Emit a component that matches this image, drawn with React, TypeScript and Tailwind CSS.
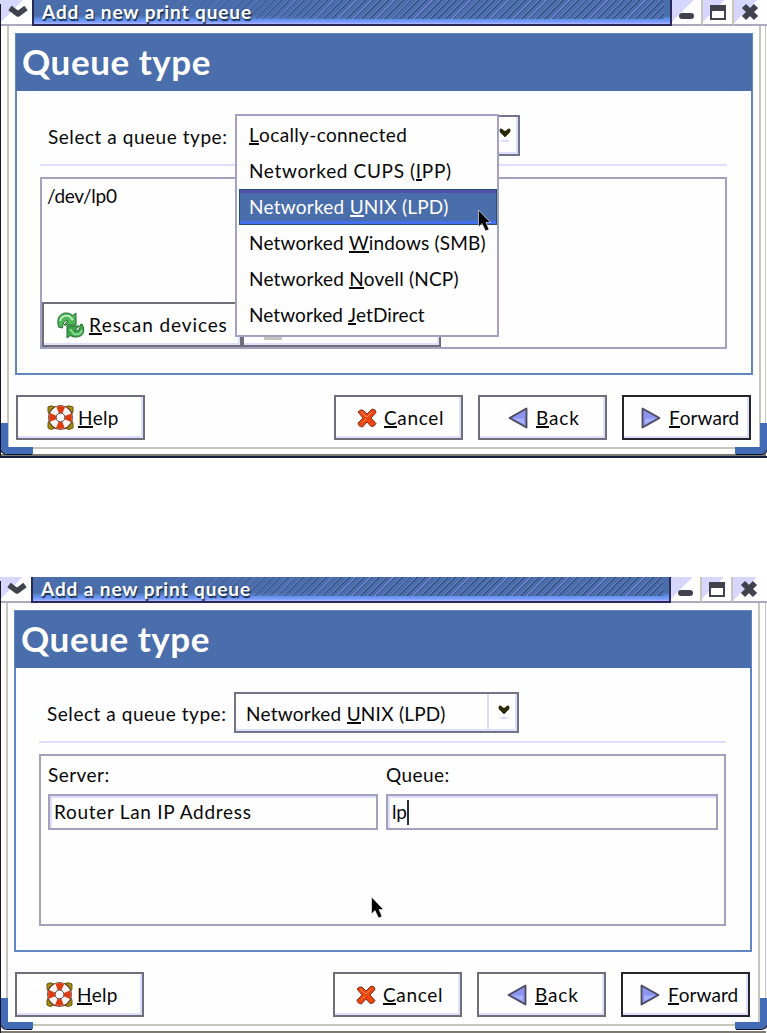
import React from "react";
import clsx from "clsx";

interface MnemonicProps {
  text: string;
  className?: string;
}

// Подчёркивает букву, которая стоит после "_"
function Mnemonic({ text, className }: MnemonicProps) {
  const index = text.indexOf("_");
  if (index === -1) {
    return <span className={clsx("whitespace-pre", className)}>{text}</span>;
  }
  return (
    <span className={clsx("whitespace-pre", className)}>
      {text.slice(0, index)}
      <span className="inline-block h-[21px] border-b-2 border-current leading-[21px]">
        {text[index + 1]}
      </span>
      {text.slice(index + 2)}
    </span>
  );
}

function LifebuoyIcon() {
  return (
    <svg width="27" height="25" viewBox="0 0 27 25">
      <path d="M1 2Q4-.5 8 2L13 4l5-2q4-2.500 8 0v5l-3 5 3 6v5q-4 3-8 0l-5-2-5 2q-4 3-7 0v-5l3-6-3-5z" fill="#a58a10" stroke="#6b5a10" />
      <circle cx="13.500" cy="12.500" r="8" fill="none" stroke="#4a2020" strokeWidth="8.500" />
      <circle cx="13.500" cy="12.500" r="8" fill="none" stroke="#f7f3f0" strokeWidth="6.800" />
      <circle
        cx="13.500"
        cy="12.500"
        r="8"
        fill="none"
        stroke="#de3c10"
        strokeWidth="6.800"
        strokeDasharray="6.283 6.283"
        strokeDashoffset="3.141"
      />
      <circle cx="13.500" cy="12.500" r="4.400" fill="#fff" stroke="#5a4a52" />
    </svg>
  );
}

function CancelIcon() {
  return (
    <svg width="20" height="20" viewBox="0 0 20 20">
      <path
        d="M1 4Q4 .5 6.500 2.500L10 6 15 1Q19 1 19 4.500L14 10 19 15.500Q17.500 19 14 18.500L10 14 5.500 19Q1 18.500 1 15L6 10Z"
        fill="#ef4510"
        stroke="#7b3520"
        strokeLinejoin="round"
      />
      <path d="M4 4l6 5 5-5M5 15l4-4" fill="none" stroke="#ff8a5a" />
    </svg>
  );
}

function ArrowIcon({ direction }: { direction: "back" | "forward" }) {
  return (
    <svg
      width="20"
      height="22"
      viewBox="0 0 20 22"
      className={direction === "back" ? "-scale-x-100" : ""}
    >
      <path d="M1.500 1.500v19L18.500 11z" fill="#8c92ee" stroke="#4a4a5a" strokeWidth="1.800" strokeLinejoin="round" />
      <path d="M4 11.500h11L4 17z" fill="#a5b2ff" />
    </svg>
  );
}

function RescanIcon() {
  return (
    <svg width="28" height="27" viewBox="0 0 28 27" strokeLinejoin="round">
      <path d="M1.500 15C-1 5 4 1 9 1c3 0 5 1 7 2.500L19 1v12H7l4-4c-3-1-5 1-5.500 7z" fill="#4fb55a" stroke="#1f6b2c" />
      <path d="M3 9c1-4 4-6 9-5l4 4" fill="none" stroke="#b9edbc" strokeWidth="2" />
      <path d="M25 12c4 7 1 13-6 13-2 0-4 0-5.500-1.500L10 26V14h12l-4 4.500c3 1 5-1 5-5.500z" fill="#3fa54a" stroke="#1f6b2c" />
      <path d="M13 17l4 5c4 1 7 0 8-4" fill="none" stroke="#8fd996" strokeWidth="2" />
    </svg>
  );
}

function Pointer({ className }: { className: string }) {
  return (
    <svg width="15" height="23" viewBox="0 0 14 23" className={clsx("absolute z-20", className)}>
      <path d="M1 1v17l3.500-3.500L8 22l3.500-1.500L8.500 13.500H13z" fill="#000" stroke="#fff" strokeWidth=".6" />
    </svg>
  );
}

interface PushButtonProps {
  icon: React.ReactNode;
  label: string;
  className?: string;
  labelClass?: string;
  isDefault?: boolean;
}

function PushButton({ icon, label, className, labelClass, isDefault }: PushButtonProps) {
  return (
    <button
      className={clsx(
        "flex h-[45px] items-center border-2 bg-[#fefefe] shadow-[inset_-2px_-2px_0_#dedeff]",
        isDefault ? "border-[#25252d]" : "border-[#6f6f7c]",
        className
      )}
    >
      {icon}
      <Mnemonic text={label} className={labelClass} />
    </button>
  );
}

function TitleBar({ menuWidth }: { menuWidth: string }) {
  const control =
    "relative flex h-[26px] w-[31px] items-center justify-center border-b-2 border-r-2 border-b-[#adaabd] border-r-[#c6c6bd] bg-[linear-gradient(135deg,#d6d6ff_40%,#fefefe_42%)]";
  return (
    <div className="flex h-[26px]">
      <div
        className={clsx(
          "flex items-start justify-center border-b-2 border-[#adaabd] bg-[linear-gradient(135deg,#d6d6ff_40%,#fefefe_42%)]",
          menuWidth
        )}
      >
        <svg width="20" height="20" viewBox="0 0 20 20" className="ml-[3px]">
          <path d="M2 8l8 6 8-6" fill="none" stroke="#42424f" strokeWidth="5.500" strokeLinejoin="round" />
        </svg>
      </div>
      <div className="relative flex h-[26px] w-[640px] overflow-hidden border-b-2 border-l-2 border-r-2 border-[#29295a] bg-[linear-gradient(#4a6dab_0_65%,#6391e8_80%,#739aff_90%,#b5b5ff)]">
        <div className="ml-[98px] h-[19px] w-[532px] bg-[repeating-linear-gradient(135deg,#4a6dab_0_2.200px,#7480d0_2.200px_3.100px,#34557f_3.100px_4.300px,#4a6dab_4.300px_5.380px)] [mask-image:linear-gradient(90deg,transparent,#000_45%)]" />
        <h1 className="absolute left-[8px] top-0 whitespace-pre text-[19px] font-bold leading-[24px] tracking-[.9px] text-white [text-shadow:1px_2px_1px_#173052]">
          Add a new print queue
        </h1>
      </div>
      <div className={control}>
        <span className="mt-[7px] h-[6px] w-[15px] rounded-[3px] bg-[#42424f]" />
      </div>
      <div className={control}>
        <span className="h-[15px] w-[16px] border-2 border-t-[6px] border-[#42424f]" />
      </div>
      <div className="flex h-[26px] flex-1 items-center justify-center border-b-2 border-[#adaabd] bg-[linear-gradient(135deg,#d6d6ff_40%,#fefefe_42%)]">
        <svg width="18" height="18" viewBox="0 0 18 18" className="mr-[2px]">
          <path d="M3 3l12 12M15 3L3 15" stroke="#42424f" strokeWidth="6" />
        </svg>
      </div>
    </div>
  );
}

// Синие уголки рамки окна
function Corners() {
  return (
    <>
      <i className="absolute bottom-[4px] left-[1px] h-[31px] w-[32px] rounded-bl-[7px] border-b-[7px] border-l-[7px] border-[#426bb5] shadow-[-1px_1px_0_#101030]" />
      <i className="absolute bottom-[4px] right-0 h-[31px] w-[32px] rounded-br-[7px] border-b-[7px] border-r-[7px] border-[#426bb5] shadow-[1px_1px_0_#101030]" />
    </>
  );
}

interface QueueWindowProps {
  children: React.ReactNode;
  second?: boolean;
}

function QueueWindow({ children, second }: QueueWindowProps) {
  return (
    <section className={clsx("relative w-[767px] overflow-hidden bg-[#fefefe]", second ? "h-[456px]" : "h-[458px]")}>
      <TitleBar menuWidth={second ? "w-[31px]" : "w-[32px]"} />
      <div
        className={clsx(
          "h-[423px] border-b-2 border-l-2 border-r-2 border-[#c6c6bd] pt-[7px]",
          second ? "ml-[6px] mr-[7px] pl-[6px]" : "ml-[7px] mr-[6px] pl-[6px]"
        )}
      >
        <div className="h-[342px] w-[738px] border-2 border-[#5f88c2]">
          <h2 className="-mx-px -mt-px h-[57px] bg-[#4a6dab] pl-[6px] text-[35px] font-bold leading-[54px] tracking-[.55px] text-white">
            Queue type
          </h2>
          {children}
        </div>
        <div className="mt-[20px] flex pl-px">
          <PushButton icon={<LifebuoyIcon />} label="_Help" className="w-[129px] gap-[4px] pl-[29px]" labelClass="tracking-[.2px]" />
          <PushButton icon={<CancelIcon />} label="_Cancel" className="ml-[189px] w-[129px] gap-[7px] pl-[21px]" labelClass="tracking-[.65px]" />
          <PushButton icon={<ArrowIcon direction="back" />} label="_Back" className="ml-[15px] w-[129px] gap-[8px] pl-[28px]" labelClass="tracking-[.8px]" />
          <PushButton icon={<ArrowIcon direction="forward" />} label="_Forward" className="ml-[15px] w-[129px] gap-[8px] pl-[17px]" labelClass="tracking-[.05px]" isDefault />
        </div>
      </div>
      <div className={clsx("h-[7px] border-b-2 border-[#7b7b73]", second ? "mr-px" : "ml-px mr-px")} />
      <div className="h-[2px] bg-[#182040]" />
      <i className="absolute bottom-0 left-0 top-[4px] w-px bg-[#18181f]" />
      <i className="absolute bottom-[4px] right-[1px] top-[26px] w-px bg-[#c6c6bd]" />
      <Corners />
    </section>
  );
}

function ComboBox({ value }: { value: string }) {
  return (
    <div className="flex h-[41px] w-[285px] border-2 border-[#73738a] shadow-[inset_-2px_-2px_0_#dedeff]">
      <div className="w-[253px] border-r-2 border-[#dedeff] pl-[10px] leading-[39px]">
        <Mnemonic text={value} className="tracking-[.25px]" />
      </div>
      <div className="flex flex-1 justify-center pl-px pt-[11px]">
        <svg width="12" height="16" viewBox="0 0 12 16">
          <path d="M1 1h2l2 2h2l2-2h2v3L6 9 1 4z" fill="#292908" stroke="#292908" strokeWidth=".6" />
          <path d="M2 12h8v2H2z" fill="#dedeff" />
        </svg>
      </div>
    </div>
  );
}

function TypeRow({ value, children }: { value: string; children?: React.ReactNode }) {
  return (
    <div className="relative mt-[24px] flex h-[51px] w-[687px] border-b-2 border-[#dedeff]">
      <span className="w-[195px] whitespace-pre pl-[8px] leading-[44px] tracking-[.54px]">Select a queue type:</span>
      <ComboBox value={value} />
      {children}
    </div>
  );
}

const queueTypes = [
  { label: "_Locally-connected", tracking: "tracking-[.35px]" },
  { label: "Networked CUPS (_IPP)", tracking: "tracking-[.65px]" },
  { label: "Networked _UNIX (LPD)", tracking: "tracking-[.25px]" },
  { label: "Networked _Windows (SMB)", tracking: "tracking-[.18px]" },
  { label: "Networked _Novell (NCP)", tracking: "tracking-[.2px]" },
  { label: "Networked _JetDirect", tracking: "tracking-[.08px]" },
];

function QueueMenu({ selected }: { selected: number }) {
  return (
    <ul className="absolute left-[195px] top-[-1px] z-10 h-[223px] w-[264px] border-2 border-[#a3a1c4] bg-[#fefefe] pl-[2px] pt-px">
      {queueTypes.map((type, index) => (
        <li
          key={type.label}
          className={clsx(
            "h-[36px] pl-[10px] leading-[36px]",
            index === selected &&
              "bg-[#4a6dab] text-white shadow-[inset_0_0_0_1px_#294d6b,inset_0_-4px_0_#4270ef,inset_0_4px_0_#5251ad]"
          )}
        >
          <Mnemonic text={type.label} className={type.tracking} />
        </li>
      ))}
    </ul>
  );
}

interface FieldProps {
  label: string;
  value: string;
  width: string;
  focused?: boolean;
}

function Field({ label, value, width, focused }: FieldProps) {
  return (
    <div className={width}>
      <div className="h-[32px] leading-[26px]">{label}</div>
      <div className="flex h-[36px] items-center border-2 border-[#a3a1bd] pl-[4px] shadow-[inset_2px_2px_0_#dedeff]">
        <span className={clsx("whitespace-pre", focused ? "tracking-[-.3px]" : "tracking-[.7px]")}>{value}</span>
        {focused && <i className="h-[25px] w-[2px] bg-[#303030]" />}
      </div>
    </div>
  );
}

export default function App() {
  return (
    <main className="h-[1033px] w-[767px] overflow-hidden bg-white font-[Lato,sans-serif] text-[19px] leading-[24px] tracking-[.45px] text-[#080808]">
      <QueueWindow>
        <div className="pl-[23px]">
          <TypeRow value="">
            <QueueMenu selected={2} />
            <Pointer className="left-[437px] top-[94px]" />
          </TypeRow>
          <div className="mt-[11px] flex h-[172px] w-[687px] flex-col border-2 border-[#a3a1bd]">
            <div className="flex-1 pl-[5px] pt-[5px] tracking-[-.3px]">/dev/lp0</div>
            <div className="flex">
              <PushButton icon={<RescanIcon />} label="_Rescan devices" className="w-[200px] gap-[4px] pl-[13px] pt-px" labelClass="tracking-[.9px]" />
              <div className="flex h-[45px] w-[199px] items-end border-2 border-[#6f6f7c] pb-[5px] pl-[20px] shadow-[inset_-2px_-2px_0_#dedeff]">
                <i className="h-[3px] w-[18px] bg-[#c6c6bd]" />
              </div>
            </div>
          </div>
        </div>
      </QueueWindow>
      <div className="h-[119px]" />
      <QueueWindow second>
        <div className="pl-[23px]">
          <TypeRow value="Networked _UNIX (LPD)" />
          <div className="relative mt-[11px] flex h-[172px] w-[687px] gap-[8px] border-2 border-[#a3a1bd] pl-[7px] pt-[6px]">
            <Field label="Server:" value="Router Lan IP Address" width="w-[330px]" />
            <Field label="Queue:" value="lp" width="w-[332px]" focused />
            <Pointer className="left-[329px] top-[140px]" />
          </div>
        </div>
      </QueueWindow>
    </main>
  );
}
